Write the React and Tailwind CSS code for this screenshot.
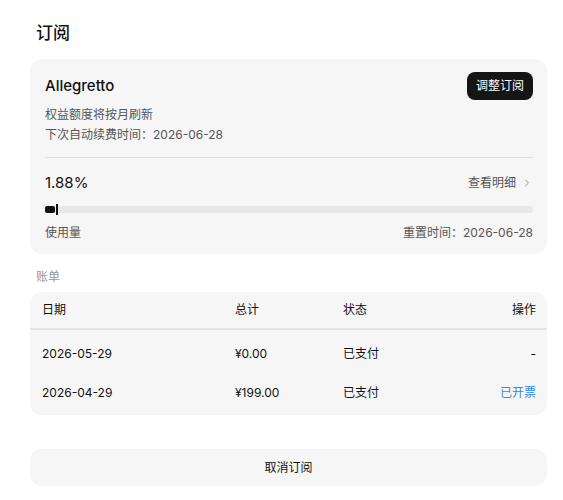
import React from 'react';
import { ChevronRight } from 'lucide-react';

const font = { fontFamily: 'Inter, "Noto Sans CJK SC", sans-serif' };

const bills = [
    { date: '2026-05-29', total: '¥0.00', status: '已支付', action: '-' },
    { date: '2026-04-29', total: '¥199.00', status: '已支付', action: '已开票', link: true },
];

const cols = 'grid grid-cols-[193px_108px_1fr_auto] items-center px-[12px] pr-[11px]';

const App = () => {
    return (
        <div className="h-screen overflow-hidden bg-white text-[#111] pl-[30px] pr-[16px] pt-[20px]" style={font}>
            <h1 className="pl-[6px] text-[17px] leading-[26px] font-medium">订阅</h1>

            {/* Plan card */}
            <div className="mt-[13px] rounded-[12px] bg-[#f6f6f6] px-[15px] pr-[14px] pt-[13px] pb-[11px]">
                <div className="flex items-center justify-between h-[28px]">
                    <span className="text-[15px] font-medium">Allegretto</span>
                    <button className="h-[28px] px-[9px] rounded-[8px] bg-[#151515] text-white text-[12px]">调整订阅</button>
                </div>
                <div className="mt-[5px] text-[12px] leading-[20px] text-[#555]">
                    <p>权益额度将按月刷新</p>
                    <p>下次自动续费时间：2026-06-28</p>
                </div>
                <div className="mt-[12px] h-px bg-[#dedede]" />

                <div className="mt-[13px] flex items-center justify-between h-[24px]">
                    <span className="text-[15px]">1.88%</span>
                    <span className="flex items-center gap-[5px] text-[12px] text-[#555]">
                        查看明细
                        <ChevronRight size={12} strokeWidth={1.5} className="text-[#777]" />
                    </span>
                </div>

                <div className="mt-[11px] relative h-[7px] rounded-full bg-[#e8e8e8]">
                    <div className="h-[7px] w-[10px] rounded-[2px] bg-[#111]" />
                    <div className="absolute left-[11px] top-[-2px] h-[11px] w-[2px] bg-[#111]" />
                </div>

                <div className="mt-[10px] flex items-center justify-between text-[12px] leading-[20px] text-[#555]">
                    <span>使用量</span>
                    <span>重置时间：2026-06-28</span>
                </div>
            </div>

            <p className="mt-[13px] pl-[6px] text-[12px] leading-[20px] text-[#999]">账单</p>

            {/* Billing table */}
            <div className="mt-[5px] rounded-[12px] bg-[#f6f6f6] text-[12px]">
                <div className={`${cols} h-[38px] border-b-2 border-[#e4e4e4]`}>
                    <span>日期</span>
                    <span>总计</span>
                    <span>状态</span>
                    <span className="text-right">操作</span>
                </div>
                <div className="flex flex-col gap-[19px] pt-[14px] pb-[12px]">
                    {bills.map((b) => (
                        <div key={b.date} className={`${cols} h-[20px]`}>
                            <span>{b.date}</span>
                            <span>{b.total}</span>
                            <span>{b.status}</span>
                            <span className={b.link ? 'text-right text-[#2f8cf0]' : 'text-right'}>{b.action}</span>
                        </div>
                    ))}
                </div>
            </div>

            <button className="mt-[34px] w-full h-[37px] rounded-[12px] bg-[#f6f6f6] text-[12px]">取消订阅</button>
        </div>
    );
};

export default App;
